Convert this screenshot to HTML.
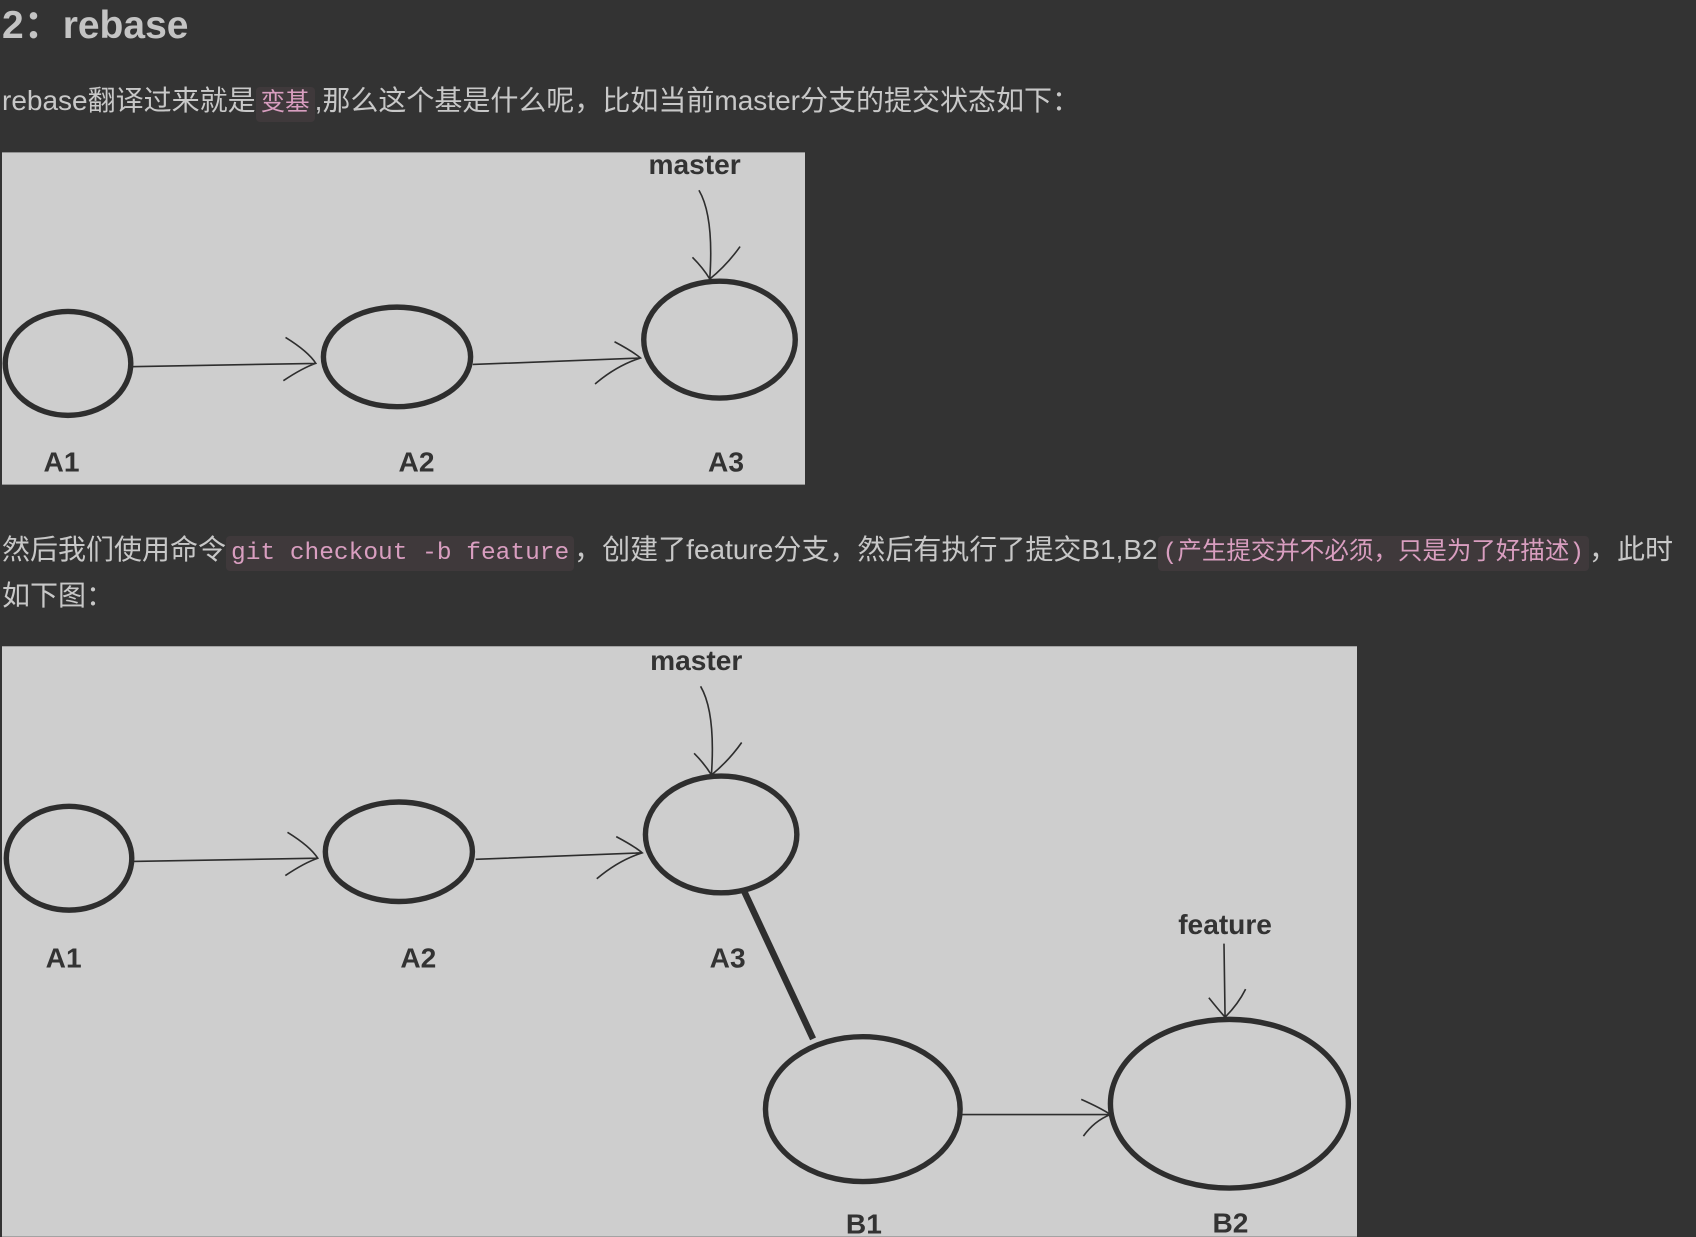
<!DOCTYPE html>
<html><head><meta charset="utf-8"><style>
body{margin:0;width:1696px;height:1236px;background:#333;overflow:hidden;font-family:"Liberation Sans","Noto Sans CJK SC",sans-serif;color:#c8c8c8}
.t{position:absolute;left:2px;white-space:nowrap;font-size:28px;line-height:46px}
h2{position:absolute;left:2px;top:0;margin:0;font-size:39px;line-height:52px;font-weight:bold;color:#c4c4c4}
code{font-family:"Liberation Mono","Noto Sans CJK SC",monospace;font-size:24.5px;color:#d99ec0;background:#3f393b;border-radius:4px;padding:4px 5px}
svg{position:absolute;left:2px}
svg text{font-family:"Liberation Sans",sans-serif;font-weight:bold;fill:#333;font-size:26px;text-anchor:middle}
</style></head><body>
<h2>2：rebase</h2>
<div class="t" style="top:78px">rebase翻译过来就是<code>变基</code>,那么这个基是什么呢，比如当前master分支的提交状态如下：</div>
<svg style="top:152px" width="803" height="333" viewBox="2 141 742 307">
<rect x="2" y="141" width="742" height="307" fill="#cecece"/>
<g fill="none" stroke="#2e2e2e">
<ellipse cx="63" cy="336" rx="58" ry="48" stroke-width="5"/>
<ellipse cx="367" cy="330" rx="68" ry="46" stroke-width="5"/>
<ellipse cx="665" cy="314" rx="70" ry="54" stroke-width="5"/>
<path d="M121 339 L292 336 M264 312 Q285 325 292 336 Q280 340 262 352" stroke-width="1.5"/>
<path d="M437 337 L592 331 M568 316 Q585 325 592 331 Q570 338 550 355" stroke-width="1.5"/>
<path d="M646 176 Q660 200 656 258 M640 238 Q650 248 656 258 Q672 245 684 228" stroke-width="1.5"/>
</g>
<text x="642" y="161">master</text>
<text x="57" y="436">A1</text><text x="385" y="436">A2</text><text x="671" y="436">A3</text>
</svg>
<div class="t" style="top:527px">然后我们使用命令<code>git checkout -b feature</code>，创建了feature分支，然后有执行了提交B1,B2<code>(产生提交并不必须，只是为了好描述)</code>，此时</div>
<div class="t" style="top:573px">如下图：</div>
<svg style="top:646px" width="1355" height="591" viewBox="2 597 1253 546">
<rect x="2" y="597" width="1253" height="546" fill="#cecece"/>
<g fill="none" stroke="#2e2e2e">
<ellipse cx="64" cy="793" rx="58" ry="48" stroke-width="5"/>
<ellipse cx="369" cy="787" rx="68" ry="46" stroke-width="5"/>
<ellipse cx="667" cy="771" rx="70" ry="54" stroke-width="5"/>
<ellipse cx="798" cy="1025" rx="90" ry="67" stroke-width="5"/>
<ellipse cx="1137" cy="1020" rx="110" ry="78" stroke-width="5"/>
<path d="M688 823 L752 960" stroke-width="6"/>
<path d="M123 796 L294 793 M266 769 Q287 782 294 793 Q282 797 264 809" stroke-width="1.5"/>
<path d="M440 794 L594 788 M570 773 Q587 782 594 788 Q572 795 552 812" stroke-width="1.5"/>
<path d="M648 634 Q662 658 658 716 M642 696 Q652 706 658 716 Q674 703 686 686" stroke-width="1.5"/>
<path d="M889 1030 L1027 1030 M1000 1016 Q1018 1024 1027 1030 Q1012 1036 1002 1050" stroke-width="1.5"/>
<path d="M1132 872 L1133 940 M1118 922 Q1126 932 1133 940 Q1145 928 1152 914" stroke-width="1.5"/>
</g>
<text x="644" y="619">master</text><text x="1133" y="863">feature</text>
<text x="59" y="894">A1</text><text x="387" y="894">A2</text><text x="673" y="894">A3</text>
<text x="799" y="1140">B1</text><text x="1138" y="1139">B2</text>
</svg>
</body></html>
